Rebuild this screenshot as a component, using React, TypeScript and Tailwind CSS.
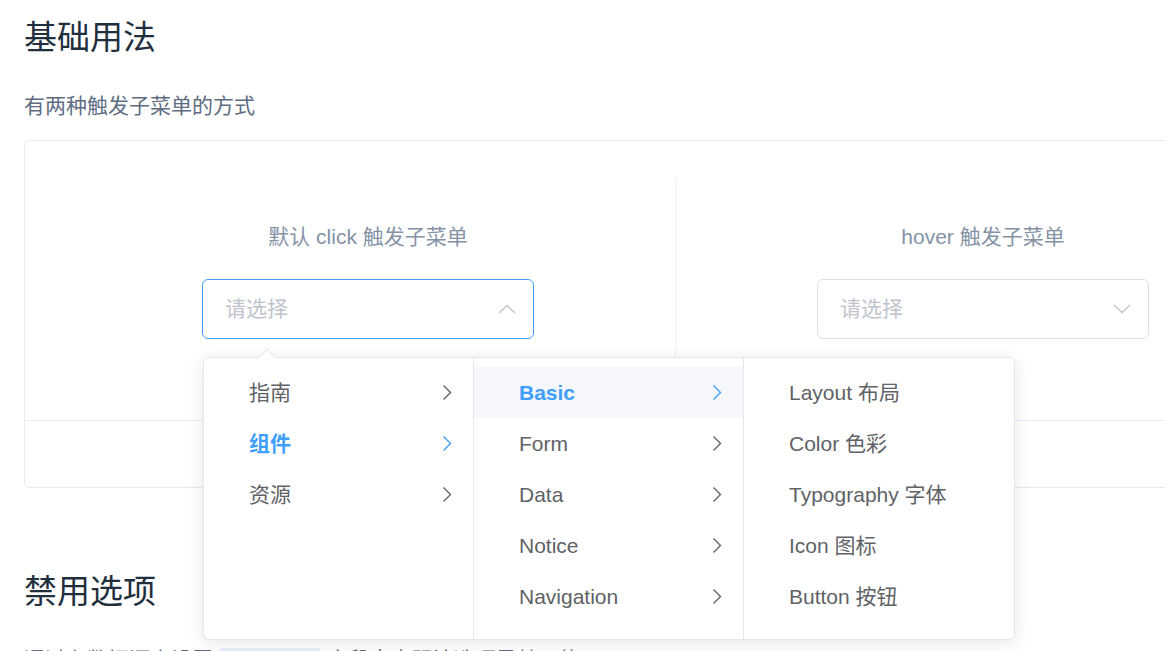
import React from 'react';

const font = { fontFamily: '"Liberation Sans", "Noto Sans CJK SC", sans-serif' };

function Chevron({ dir, className }: { dir: 'up' | 'down' | 'right'; className?: string }) {
  if (dir === 'right') {
    return (
      <svg width="10" height="17" viewBox="0 0 10 17" className={className}>
        <path d="M1.5 1.5 L8.5 8.5 L1.5 15.5" fill="none" stroke="currentColor" strokeWidth="1.4" />
      </svg>
    );
  }
  return (
    <svg width="18" height="10" viewBox="0 0 18 10" className={className}>
      <path
        d={dir === 'up' ? 'M1 9 L9 1.5 L17 9' : 'M1 1 L9 8.5 L17 1'}
        fill="none"
        stroke="currentColor"
        strokeWidth="1.4"
      />
    </svg>
  );
}

type Item = { label: string; arrow?: boolean; active?: boolean; hover?: boolean };

function Menu({ items, last }: { items: Item[]; last?: boolean }) {
  return (
    <div className={`h-[281px] w-[270px] py-[9px] ${last ? '' : 'border-r border-[#e4e7ed]'}`}>
      {items.map((it) => (
        <div
          key={it.label}
          className={`flex h-[51px] items-center justify-between pl-[45px] pr-[21px] text-[21px] ${
            it.hover ? 'bg-[#f5f7fa]' : ''
          } ${it.active ? 'font-bold text-[#409eff]' : 'text-[#606266]'}`}
        >
          <span>{it.label}</span>
          {it.arrow && <Chevron dir="right" />}
        </div>
      ))}
    </div>
  );
}

function Cascader({ open }: { open?: boolean }) {
  return (
    <div className="relative mx-auto w-[332px]">
      <div
        className={`flex h-[60px] items-center justify-between rounded-[6px] border bg-white pl-[22px] pr-[17px] ${
          open ? 'border-[#409eff]' : 'border-[#dcdfe6]'
        }`}
      >
        <span className="text-[21px] text-[#c0c4cc]">请选择</span>
        <Chevron dir={open ? 'up' : 'down'} className="text-[#c0c4cc]" />
      </div>
      {open && (
        <div className="absolute left-[1px] top-[calc(100%+18px)] z-10 flex rounded-[6px] border border-[#e4e7ed] bg-white text-left shadow-[0_3px_18px_rgba(0,0,0,0.1)]">
          <div className="absolute -top-[7px] left-[57px] h-[12px] w-[12px] rotate-45 border-l border-t border-[#e4e7ed] bg-white" />
          <Menu
            items={[
              { label: '指南', arrow: true },
              { label: '组件', arrow: true, active: true },
              { label: '资源', arrow: true },
            ]}
          />
          <Menu
            items={[
              { label: 'Basic', arrow: true, active: true, hover: true },
              { label: 'Form', arrow: true },
              { label: 'Data', arrow: true },
              { label: 'Notice', arrow: true },
              { label: 'Navigation', arrow: true },
            ]}
          />
          <Menu
            last
            items={[
              { label: 'Layout 布局' },
              { label: 'Color 色彩' },
              { label: 'Typography 字体' },
              { label: 'Icon 图标' },
              { label: 'Button 按钮' },
            ]}
          />
        </div>
      )}
    </div>
  );
}

export default function App() {
  return (
    <div className="h-[651px] w-[1165px] overflow-hidden bg-white" style={font}>
      <div className="w-[1328px] pl-[24px]">
        <h3 className="mt-[16px] text-[33px] leading-[44px] text-[#1f2f3d]">基础用法</h3>
        <p className="mt-[30px] text-[21px] leading-[31px] text-[#5e6d82]">有两种触发子菜单的方式</p>

        <div className="mt-[19px] rounded-[5px] border border-[#ebebeb]">
          <div className="flex p-[36px]">
            <div className="w-1/2 border-r border-[#eff2f6] pb-[45px] pt-[46px] text-center">
              <span className="mb-[29px] block text-[21px] leading-[27px] text-[#8492a6]">默认 click 触发子菜单</span>
              <Cascader open />
            </div>
            <div className="w-1/2 border-r border-[#eff2f6] pb-[45px] pt-[46px] text-center">
              <span className="mb-[29px] block text-[21px] leading-[27px] text-[#8492a6]">hover 触发子菜单</span>
              <Cascader />
            </div>
          </div>
          <div className="h-[67px] border-t border-[#eaeefb]" />
        </div>

        <h3 className="mt-[82px] text-[33px] leading-[44px] text-[#1f2f3d]">禁用选项</h3>
        <p className="mt-[30px] text-[21px] leading-[31px] text-[#5e6d82]">
          通过在数据源中设置
          <code className="mx-[6px] inline-block h-[27px] rounded-[4px] bg-[#e6effb] px-[8px] align-middle text-[18px] leading-[27px] text-[#5e6d82]">
            disabled
          </code>
          字段来声明该选项是禁用的
        </p>
      </div>
    </div>
  );
}
